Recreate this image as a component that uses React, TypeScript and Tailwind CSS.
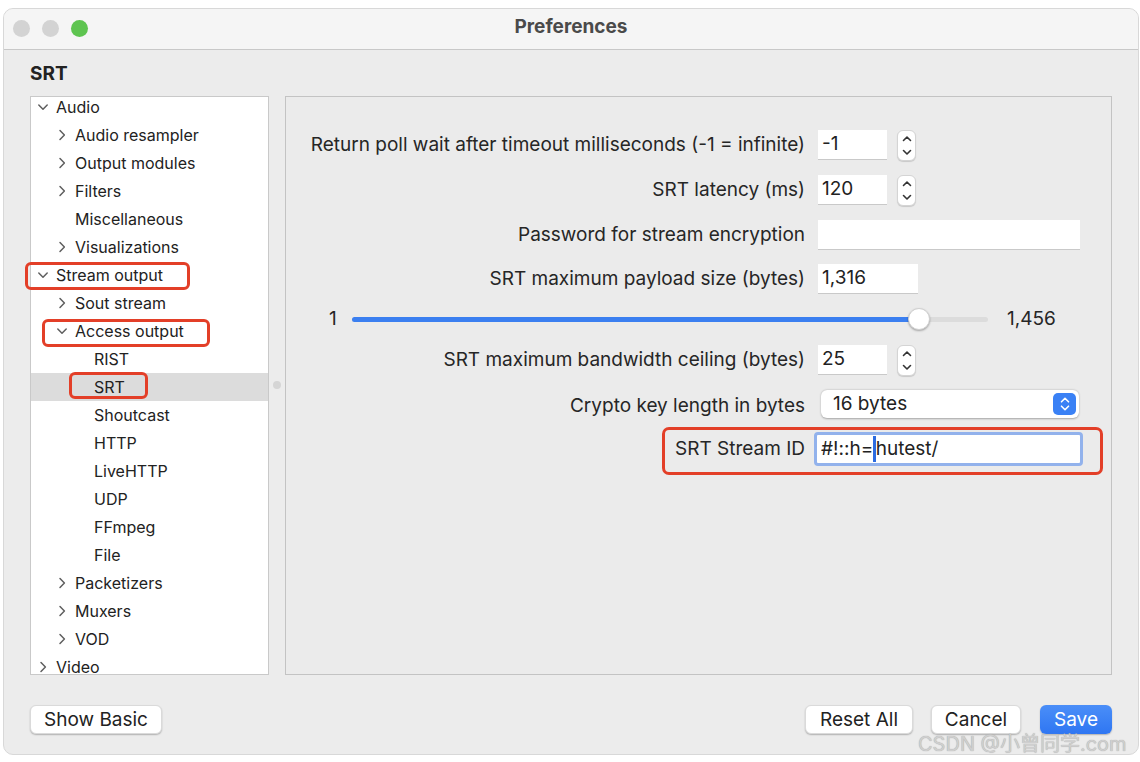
import { FC, ReactNode } from 'react';

const font = { fontFamily: 'Inter, "Noto Sans CJK SC", sans-serif' };

interface TreeItem {
  label: string;
  level: number;
  chevron?: 'down' | 'right';
  selected?: boolean;
}

const tree: TreeItem[] = [
  { label: 'Audio', level: 0, chevron: 'down' },
  { label: 'Audio resampler', level: 1, chevron: 'right' },
  { label: 'Output modules', level: 1, chevron: 'right' },
  { label: 'Filters', level: 1, chevron: 'right' },
  { label: 'Miscellaneous', level: 1 },
  { label: 'Visualizations', level: 1, chevron: 'right' },
  { label: 'Stream output', level: 0, chevron: 'down' },
  { label: 'Sout stream', level: 1, chevron: 'right' },
  { label: 'Access output', level: 1, chevron: 'down' },
  { label: 'RIST', level: 2 },
  { label: 'SRT', level: 2, selected: true },
  { label: 'Shoutcast', level: 2 },
  { label: 'HTTP', level: 2 },
  { label: 'LiveHTTP', level: 2 },
  { label: 'UDP', level: 2 },
  { label: 'FFmpeg', level: 2 },
  { label: 'File', level: 2 },
  { label: 'Packetizers', level: 1, chevron: 'right' },
  { label: 'Muxers', level: 1, chevron: 'right' },
  { label: 'VOD', level: 1, chevron: 'right' },
  { label: 'Video', level: 0, chevron: 'right' },
];

const Chevron: FC<{ dir: 'down' | 'right' }> = ({ dir }) =>
  dir === 'down' ? (
    <svg width="12" height="8" viewBox="0 0 12 8" fill="none">
      <path d="M1.8 2 6 6.2 10.2 2" stroke="#5f5f5f" strokeWidth="1.5" strokeLinecap="round" strokeLinejoin="round" />
    </svg>
  ) : (
    <svg width="8" height="12" viewBox="0 0 8 12" fill="none">
      <path d="M2 1.5 6.4 6 2 10.5" stroke="#5f5f5f" strokeWidth="1.5" strokeLinecap="round" strokeLinejoin="round" />
    </svg>
  );

const Stepper: FC = () => (
  <div className="ml-[10px] flex h-[31px] w-[19px] flex-col items-center justify-between rounded-[6px] border border-[#d4d4d4] bg-white py-[4px] shadow-[0_1px_1px_rgba(0,0,0,0.15)]">
    <svg width="10" height="7" viewBox="0 0 10 7" fill="none">
      <path d="M1.5 5.5 5 2l3.5 3.5" stroke="#333" strokeWidth="1.6" strokeLinecap="round" strokeLinejoin="round" />
    </svg>
    <svg width="10" height="7" viewBox="0 0 10 7" fill="none">
      <path d="M1.5 1.5 5 5l3.5-3.5" stroke="#333" strokeWidth="1.6" strokeLinecap="round" strokeLinejoin="round" />
    </svg>
  </div>
);

const Field: FC<{ w: string; value?: string }> = ({ w, value }) => (
  <div
    className={`${w} flex h-[30px] items-center border-b border-[#c9c9c9] bg-white pl-[4px] text-[19px] text-[#222]`}
  >
    {value}
  </div>
);

const Row: FC<{ label: string; mt: string; children: ReactNode }> = ({ label, mt, children }) => (
  <div className={`${mt} flex h-[30px] items-center`}>
    <div className="w-[519px] text-right text-[19px] text-[#262626]">{label}</div>
    <div className="ml-[13px] flex items-center">{children}</div>
  </div>
);

const Button: FC<{ w: string; children: ReactNode; primary?: boolean }> = ({ w, children, primary }) => (
  <button
    className={`${w} h-[29px] rounded-[6px] text-[19px] leading-none shadow-[0_1px_1.5px_rgba(0,0,0,0.25)] ${
      primary
        ? 'bg-gradient-to-b from-[#4a8ef8] to-[#2f76f2] text-white'
        : 'border border-[#dadada] bg-white text-[#222]'
    }`}
  >
    {children}
  </button>
);

export default function App() {
  return (
    <div className="relative h-[762px] w-[1140px] overflow-hidden bg-white" style={font}>
      <div className="ml-[3px] mt-[8px] flex h-[747px] w-[1136px] flex-col overflow-hidden rounded-[10px] border border-[#d8d8d8] bg-[#ececec]">
        {/* title bar */}
        <div className="relative flex h-[41px] shrink-0 items-center justify-center border-b border-[#c8c8c8] bg-[#f5f5f5] pb-[3px]">
          <div className="absolute left-[9px] top-[11px] flex gap-[12px]">
            <span className="h-[17px] w-[17px] rounded-full bg-[#d3d3d3]" />
            <span className="h-[17px] w-[17px] rounded-full bg-[#d3d3d3]" />
            <span className="h-[17px] w-[17px] rounded-full bg-[#5ec450]" />
          </div>
          <span className="text-[19px] font-bold text-[#4a4a4a]">Preferences</span>
        </div>

        <div className="flex flex-1 flex-col px-[26px]">
          <div className="mt-[13px] h-[22px] text-[19px] font-bold leading-[22px] text-[#222]">SRT</div>

          <div className="mt-[11px] flex h-[579px]">
            {/* tree */}
            <div className="w-[239px] overflow-hidden border border-[#c9c9c9] bg-white">
              <div className="-mt-[4px]">
                {tree.map((item) => (
                  <div
                    key={item.label}
                    className={`relative flex h-[28px] items-center text-[16px] text-[#222] ${
                      item.selected ? 'bg-[#dcdcdc]' : ''
                    }`}
                    style={{ paddingLeft: 4 + item.level * 19 }}
                  >
                    <span className="flex w-[16px] items-center justify-center">
                      {item.chevron && <Chevron dir={item.chevron} />}
                    </span>
                    <span className="ml-[5px]">{item.label}</span>
                  </div>
                ))}
              </div>
            </div>

            {/* splitter */}
            <div className="flex w-[16px] items-center justify-center">
              <span className="mt-[-2px] h-[8px] w-[8px] rounded-full bg-[#d5d5d5]" />
            </div>

            {/* settings panel */}
            <div className="flex-1 border border-[#c3c3c3] bg-[#ebebeb] pt-[33px]">
              <Row label="Return poll wait after timeout milliseconds (-1 = infinite)" mt="mt-0">
                <Field w="w-[69px]" value="-1" />
                <Stepper />
              </Row>
              <Row label="SRT latency (ms)" mt="mt-[15px]">
                <Field w="w-[69px]" value="120" />
                <Stepper />
              </Row>
              <Row label="Password for stream encryption" mt="mt-[15px]">
                <Field w="w-[262px]" />
              </Row>
              <Row label="SRT maximum payload size (bytes)" mt="mt-[14px]">
                <Field w="w-[100px]" value="1,316" />
              </Row>

              <div className="mt-[10px] flex h-[30px] items-center pl-[43px] text-[19px] text-[#262626]">
                <span className="w-[10px]">1</span>
                <div className="relative ml-[13px] h-[5px] w-[636px] rounded-full bg-[#dcdcdc]">
                  <div className="h-full w-[566px] rounded-full bg-[#3b7ff0]" />
                  <span className="absolute left-[556px] top-[-9px] h-[22px] w-[22px] rounded-full border border-[#d0d0d0] bg-white shadow-[0_1px_2px_rgba(0,0,0,0.3)]" />
                </div>
                <span className="ml-[19px]">1,456</span>
              </div>

              <Row label="SRT maximum bandwidth ceiling (bytes)" mt="mt-[11px]">
                <Field w="w-[69px]" value="25" />
                <Stepper />
              </Row>

              <div className="mt-[14px] flex h-[30px] items-center">
                <div className="mt-[5px] w-[519px] text-right text-[19px] text-[#262626]">Crypto key length in bytes</div>
                <div className="ml-[16px] flex h-[28px] w-[258px] items-center justify-between rounded-[6px] bg-white pl-[12px] pr-[3px] text-[19px] text-[#222] shadow-[0_0.5px_2px_rgba(0,0,0,0.3)]">
                  <span>16 bytes</span>
                  <span className="flex h-[22px] w-[23px] flex-col items-center justify-center gap-[2px] rounded-[5px] bg-[#3a81f5]">
                    <svg width="10" height="6" viewBox="0 0 10 6" fill="none">
                      <path d="M1.5 4.8 5 1.3l3.5 3.5" stroke="white" strokeWidth="1.6" strokeLinecap="round" strokeLinejoin="round" />
                    </svg>
                    <svg width="10" height="6" viewBox="0 0 10 6" fill="none">
                      <path d="M1.5 1.2 5 4.7l3.5-3.5" stroke="white" strokeWidth="1.6" strokeLinecap="round" strokeLinejoin="round" />
                    </svg>
                  </span>
                </div>
              </div>

              <div className="relative mt-[15px] flex h-[30px] items-center">
                <div className="w-[519px] text-right text-[19px] text-[#262626]">SRT Stream ID</div>
                <div className="ml-[9px] flex h-[34px] w-[269px] items-center rounded-[4px] border-[3px] border-[#92b2ec] bg-white pl-[4px] text-[19px] text-[#222]">
                  <span>#!::h=</span>
                  <span className="h-[26px] w-[2.5px] bg-[#2c6be0]" />
                  <span>hutest/</span>
                </div>
                <span className="absolute left-[376px] top-[-7px] h-[48px] w-[441px] rounded-[7px] border-[3px] border-[#e33f28]" />
              </div>
            </div>
          </div>

          <div className="mt-[30px] flex items-center">
            <Button w="w-[132px]">Show Basic</Button>
            <div className="flex-1" />
            <Button w="w-[108px]">Reset All</Button>
            <div className="w-[18px]" />
            <Button w="w-[90px]">Cancel</Button>
            <div className="w-[19px]" />
            <Button w="w-[72px]" primary>
              Save
            </Button>
          </div>
        </div>
      </div>

      {/* red annotation boxes on the tree */}
      <span className="absolute left-[25px] top-[262px] h-[28px] w-[165px] rounded-[6px] border-[3px] border-[#e33f28]" />
      <span className="absolute left-[42px] top-[319px] h-[28px] w-[168px] rounded-[6px] border-[3px] border-[#e33f28]" />
      <span className="absolute left-[69px] top-[372px] h-[27px] w-[79px] rounded-[6px] border-[3px] border-[#e33f28]" />

      {/* watermark */}
      <span className="absolute left-[918px] top-[729px] text-[20px] text-[#cfcfcf] [text-shadow:0_0_1px_#9a9a9a]">
        CSDN @小曾同学.com
      </span>
    </div>
  );
}
